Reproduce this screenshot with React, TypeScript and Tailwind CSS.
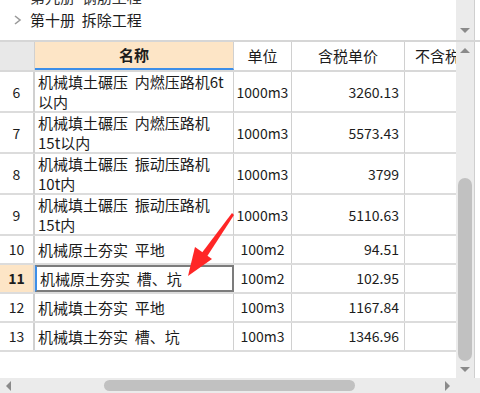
import React from "react";

interface Row {
  no: number;
  name: string;
  unit: string;
  price: string;
  tall?: boolean;
}

const rows: Row[] = [
  { no: 6, name: "机械填土碾压  内燃压路机6t以内", unit: "1000m3", price: "3260.13", tall: true },
  { no: 7, name: "机械填土碾压  内燃压路机15t以内", unit: "1000m3", price: "5573.43", tall: true },
  { no: 8, name: "机械填土碾压  振动压路机10t内", unit: "1000m3", price: "3799", tall: true },
  { no: 9, name: "机械填土碾压  振动压路机15t内", unit: "1000m3", price: "5110.63", tall: true },
  { no: 10, name: "机械原土夯实  平地", unit: "100m2", price: "94.51" },
  { no: 11, name: "机械原土夯实  槽、坑", unit: "100m2", price: "102.95" },
  { no: 12, name: "机械填土夯实  平地", unit: "100m3", price: "1167.84" },
  { no: 13, name: "机械填土夯实  槽、坑", unit: "100m3", price: "1346.96" },
];

const SELECTED = 11;
const cols = "grid grid-cols-[35px_199px_58px_113px_120px]";

function Tri({ dir }: { dir: "up" | "down" | "left" | "right" }) {
  const pts = {
    up: "0,5 5,0 10,5",
    down: "0,0 10,0 5,5",
    left: "5,0 5,10 0,5",
    right: "0,0 0,10 5,5",
  }[dir];
  const w = dir === "up" || dir === "down" ? 10 : 5;
  const h = dir === "up" || dir === "down" ? 5 : 10;
  return (
    <svg width={w} height={h} viewBox={`0 0 ${w} ${h}`}>
      <polygon points={pts} fill="#8a8a8a" />
    </svg>
  );
}

export default function App() {
  return (
    <div
      className="relative w-[480px] h-[393px] overflow-hidden bg-white text-[#1c1c1c] flex flex-col"
      style={{ fontFamily: '"Noto Sans CJK SC", "Liberation Sans", sans-serif' }}
    >
      {/* tree panel */}
      <div className="h-[42px] flex border-b-2 border-[#d6d6d6] shrink-0">
        <div className="flex-1 flex flex-col overflow-hidden">
          <div className="h-[22px] -mt-[14px] pl-[30px] text-[15px] leading-[22px] text-[#333] whitespace-pre">
            第九册  钢筋工程
          </div>
          <div className="flex items-center h-[22px] mt-[1px]">
            <svg width="30" height="14" viewBox="0 0 30 14">
              <path d="M15 3 L20 7 L15 11" stroke="#9a9a9a" strokeWidth="1.6" fill="none" />
            </svg>
            <span className="text-[15px] leading-[22px] whitespace-pre">第十册  拆除工程</span>
          </div>
        </div>
        <div className="w-[18px] bg-[#ebebeb] flex flex-col justify-end items-center pb-[7px]">
          <Tri dir="down" />
        </div>
        <div className="w-[6px] border-l border-[#cfcfcf]" />
      </div>

      {/* grid */}
      <div className="flex flex-1 min-h-0">
        <div className="w-[456px] overflow-hidden text-[14px]">
          {/* header */}
          <div className={`${cols} h-[30px] border-b-2 border-[#d8d8d8]`}>
            <div className="bg-[#e8e8e8] border-r border-[#d0d0d0]" />
            <div className="bg-[#fde5c6] border-r border-[#d0d0d0] border-b-2 border-b-[#3d8ee8] flex items-center justify-center font-bold text-[15px]">
              名称
            </div>
            <div className="border-r border-[#d0d0d0] flex items-center justify-center text-[15px]">单位</div>
            <div className="border-r border-[#d0d0d0] flex items-center justify-center text-[15px]">含税单价</div>
            <div className="flex items-center pl-[10px] whitespace-nowrap text-[15px]">不含税单价</div>
          </div>

          {rows.map((r) => {
            const sel = r.no === SELECTED;
            return (
              <div
                key={r.no}
                className={`${cols} ${r.tall ? "h-[41px]" : "h-[29px]"} border-b-2 border-[#dcdcdc]`}
              >
                <div
                  className={`border-r-2 border-[#d0d0d0] flex items-center justify-center text-[14px] ${
                    sel ? "bg-[#fde5c6] font-bold" : ""
                  }`}
                >
                  {r.no}
                </div>
                <div
                  className={`pl-[3px] pr-[4px] flex items-center leading-[20px] text-[15px] whitespace-pre-wrap ${
                    sel ? "border-2 border-[#7c7c7c] border-l-[#3d8ee8]" : "border-r border-[#d0d0d0]"
                  }`}
                >
                  {r.name}
                </div>
                <div className="border-r border-[#d0d0d0] flex items-center justify-center">
                  {r.unit}
                </div>
                <div className="border-r border-[#d0d0d0] flex items-center justify-end pr-[5px]">
                  {r.price}
                </div>
                <div />
              </div>
            );
          })}
        </div>

        {/* vertical scrollbar */}
        <div className="w-[18px] bg-[#ebebeb] flex flex-col items-center py-[6px]">
          <Tri dir="up" />
          <div className="flex-1 w-full px-[2px] flex flex-col justify-end pb-[6px]">
            <div className="h-[183px] bg-[#c1c1c1] rounded-full" />
          </div>
          <Tri dir="down" />
        </div>
        <div className="w-[6px] border-l border-[#cfcfcf]" />
      </div>

      {/* horizontal scrollbar */}
      <div className="h-[15px] flex shrink-0">
        <div className="w-[456px] bg-[#ebebeb] flex items-center px-[6px]">
          <Tri dir="left" />
          <div className="w-[93px]" />
          <div className="w-[251px] h-[11px] bg-[#c1c1c1] rounded-full" />
          <div className="flex-1" />
          <Tri dir="right" />
        </div>
        <div className="flex-1 bg-[#ebebeb]" />
      </div>

      {/* red annotation arrow */}
      <svg className="absolute left-0 top-0 pointer-events-none" width="480" height="393">
        <polygon points="232,213 234,215 206,258 201,254" fill="#ff2626" />
        <polygon points="188,276 195,247 212,259" fill="#ff2626" />
      </svg>
    </div>
  );
}
